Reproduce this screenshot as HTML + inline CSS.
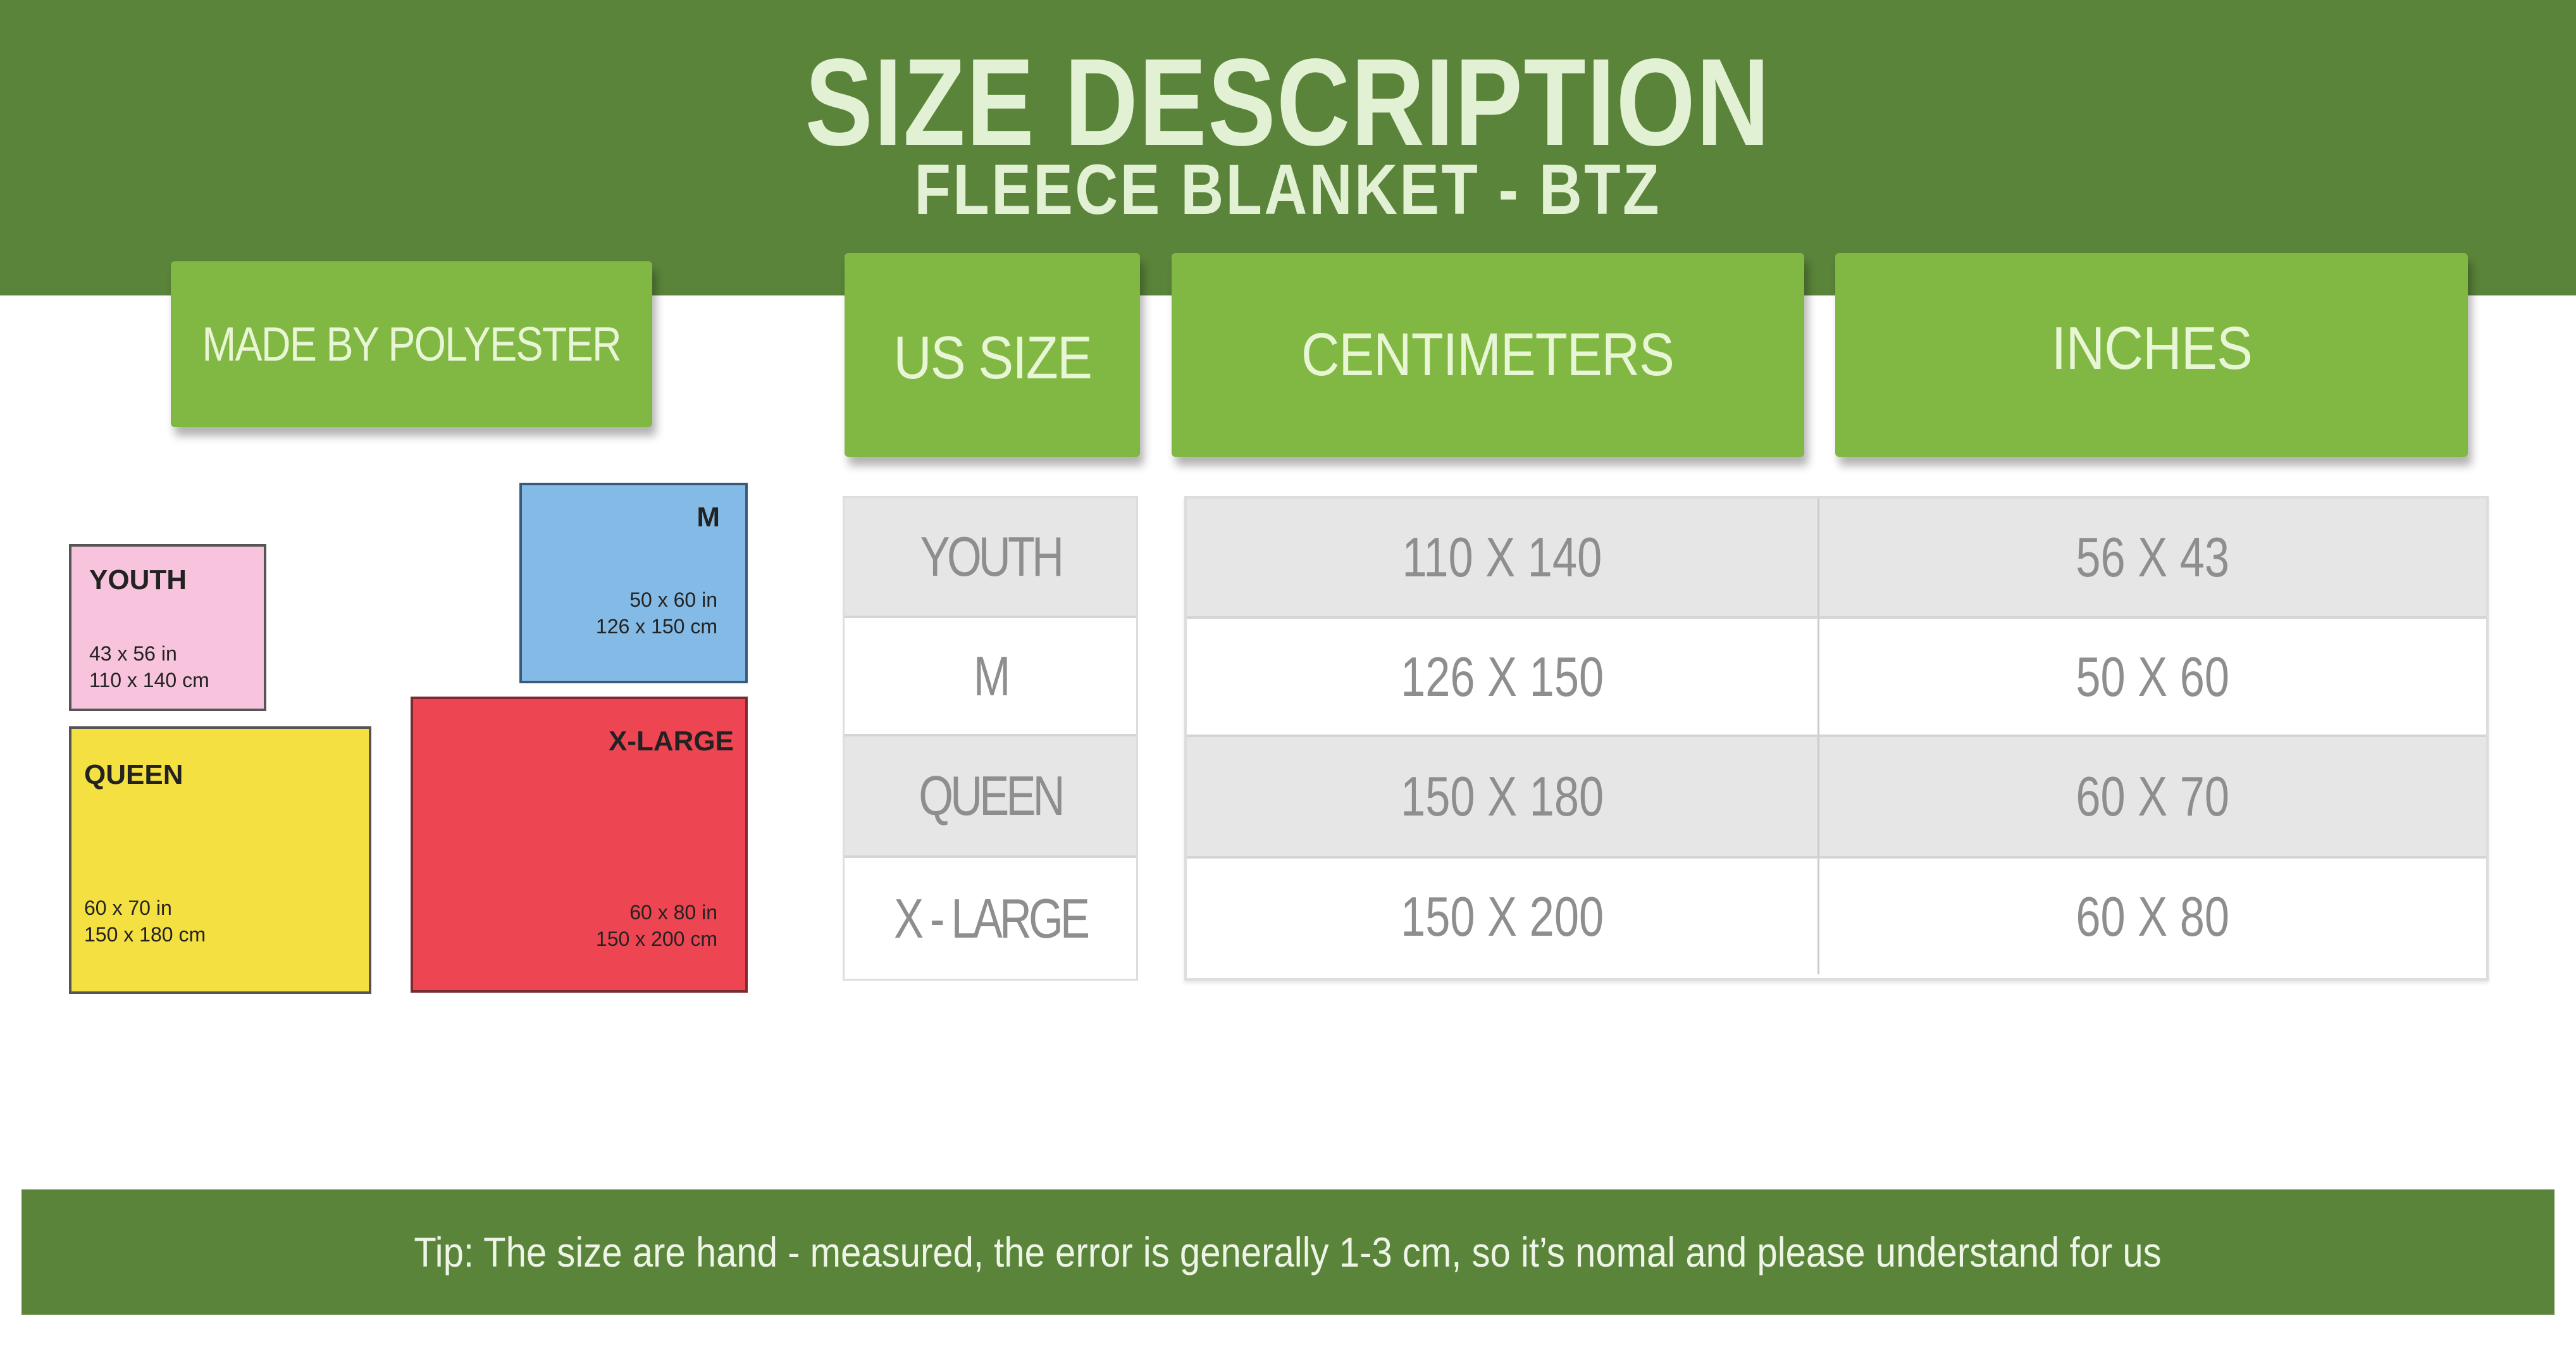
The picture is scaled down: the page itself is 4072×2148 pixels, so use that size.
<!DOCTYPE html>
<html><head><meta charset="utf-8"><style>
*{margin:0;padding:0;box-sizing:border-box}
body{width:4072px;height:2148px;background:#fff;position:relative;overflow:hidden;font-family:"Liberation Sans",sans-serif}
.a{position:absolute}
.s{display:inline-block;white-space:nowrap}
.hdr{left:0;top:0;width:4072px;height:467px;background:#5a843a}
.t1{left:0;width:4072px;top:62px;text-align:center;font-size:196px;font-weight:bold;color:#e2f0d4;letter-spacing:2px;line-height:200px}
.t1 .s{transform:scaleX(0.82)}
.t2{left:0;width:4072px;top:245px;text-align:center;font-size:112px;font-weight:bold;color:#e2f0d4;letter-spacing:4px;line-height:110px}
.t2 .s{transform:scaleX(0.84)}
.gb{background:#80b843;color:#e8f6d6;display:flex;align-items:center;justify-content:center;box-shadow:6px 14px 14px rgba(0,0,0,.3);border-radius:6px;white-space:nowrap}
.cell{display:flex;align-items:center;justify-content:center;color:#8e8e8e;font-size:88px;border-bottom:4px solid #d4d4d4;white-space:nowrap}
.cell .s{transform:scaleX(0.8)}
.g{background:#e6e6e6}.w{background:#fff}
.sq{border:4px solid #555;color:#222}
.sq b{position:absolute;font-size:44px}
.sq span{position:absolute;font-size:32px;line-height:42px}
.bot{left:34px;top:1880px;width:4004px;height:198px;background:#5a843a;color:#eef5e6;font-size:66px;display:flex;align-items:center;justify-content:center}
</style></head><body>
<div class="a hdr"></div>
<div class="a t1"><span class="s">SIZE DESCRIPTION</span></div>
<div class="a t2"><span class="s">FLEECE BLANKET - BTZ</span></div>

<div class="a gb" style="left:270px;top:413px;width:761px;height:262px;font-size:76px;letter-spacing:-2px"><span class="s" style="transform:scaleX(0.85)">MADE BY POLYESTER</span></div>
<div class="a gb" style="left:1335px;top:400px;width:467px;height:322px;font-size:96px;letter-spacing:-2px;padding-top:10px"><span class="s" style="transform:scaleX(0.87)">US SIZE</span></div>
<div class="a gb" style="left:1852px;top:400px;width:1000px;height:322px;font-size:96px;letter-spacing:-1px"><span class="s" style="transform:scaleX(0.87)">CENTIMETERS</span></div>
<div class="a gb" style="left:2901px;top:400px;width:1000px;height:322px;font-size:96px;letter-spacing:-1px;padding-bottom:20px"><span class="s" style="transform:scaleX(0.89)">INCHES</span></div>

<div class="a" style="left:1332px;top:784px;width:467px;height:766px;border:3px solid #ddd">
<div class="cell g" style="height:190px;letter-spacing:-6px"><span class="s">YOUTH</span></div>
<div class="cell w" style="height:187px;letter-spacing:-6px"><span class="s">M</span></div>
<div class="cell g" style="height:192px;letter-spacing:-6px"><span class="s">QUEEN</span></div>
<div class="cell w" style="height:191px;letter-spacing:-6px;border-bottom:none"><span class="s">X - LARGE</span></div>
</div>
<div class="a" style="left:1872px;top:784px;width:2062px;height:766px;border:4px solid #ddd;box-shadow:0 4px 6px rgba(0,0,0,.1)">
<div style="display:flex"><div class="cell g" style="width:1000px;height:190px;border-right:3px solid #ccc"><span class="s">110 X 140</span></div><div class="cell g" style="flex:1;height:190px"><span class="s">56 X 43</span></div></div>
<div style="display:flex"><div class="cell w" style="width:1000px;height:187px;border-right:3px solid #ccc"><span class="s">126 X 150</span></div><div class="cell w" style="flex:1;height:187px"><span class="s">50 X 60</span></div></div>
<div style="display:flex"><div class="cell g" style="width:1000px;height:192px;border-right:3px solid #ccc"><span class="s">150 X 180</span></div><div class="cell g" style="flex:1;height:192px"><span class="s">60 X 70</span></div></div>
<div style="display:flex"><div class="cell w" style="width:1000px;height:183px;border-right:3px solid #ccc;border-bottom:none"><span class="s">150 X 200</span></div><div class="cell w" style="flex:1;height:183px;border-bottom:none"><span class="s">60 X 80</span></div></div>
</div>

<div class="a sq" style="left:109px;top:860px;width:312px;height:264px;background:#f7c3dd">
<b style="left:28px;top:28px">YOUTH</b><span style="left:28px;top:148px">43 x 56 in<br>110 x 140 cm</span></div>
<div class="a sq" style="left:821px;top:763px;width:361px;height:317px;background:#84bbe6;border-color:#3a5a7a">
<b style="right:40px;top:26px">M</b><span style="right:44px;top:160px;text-align:right">50 x 60 in<br>126 x 150 cm</span></div>
<div class="a sq" style="left:109px;top:1148px;width:478px;height:423px;background:#f4e040">
<b style="left:20px;top:48px">QUEEN</b><span style="left:20px;top:262px">60 x 70 in<br>150 x 180 cm</span></div>
<div class="a sq" style="left:649px;top:1101px;width:533px;height:468px;background:#ee4553;border-color:#7a2a30">
<b style="right:18px;top:42px">X-LARGE</b><span style="right:44px;top:316px;text-align:right">60 x 80 in<br>150 x 200 cm</span></div>

<div class="a bot"><span class="s" style="transform:scaleX(0.88)">Tip: The size are hand - measured, the error is generally 1-3 cm, so it’s nomal and please understand for us</span></div>
</body></html>
